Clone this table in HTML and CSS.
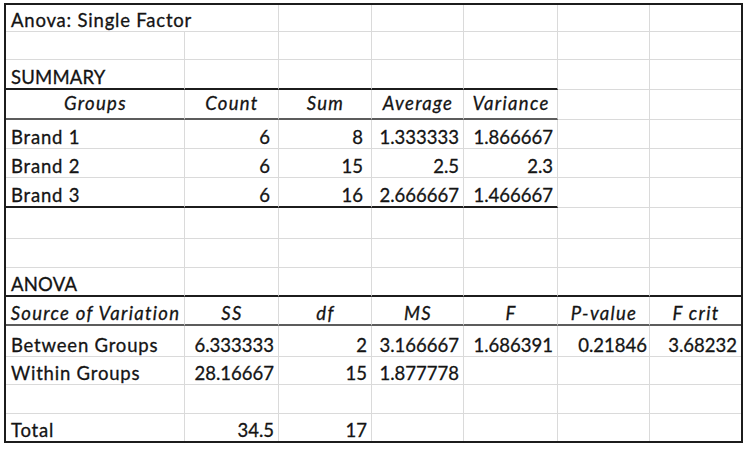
FILE: index.html
```html
<!DOCTYPE html>
<html lang="en">
<head>
<meta charset="utf-8">
<title>Anova: Single Factor</title>
<link rel="stylesheet" href="styles.css">
</head>
<body>
<div class="sheet">
  <!-- row 1 -->
  <div class="c span2">Anova: Single Factor</div>
  <div class="c"></div><div class="c"></div><div class="c"></div><div class="c"></div><div class="c lc"></div>
  <!-- row 2 -->
  <div class="c"></div><div class="c"></div><div class="c"></div><div class="c"></div><div class="c"></div><div class="c"></div><div class="c lc"></div>
  <!-- row 3 -->
  <div class="c caps thick">SUMMARY</div><div class="c thick"></div><div class="c thick"></div><div class="c thick"></div><div class="c thick"></div><div class="c"></div><div class="c lc"></div>
  <!-- row 4 -->
  <div class="c hd dark up">Groups</div><div class="c hd dark up">Count</div><div class="c hd dark up">Sum</div><div class="c hd dark up">Average</div><div class="c hd dark up">Variance</div><div class="c"></div><div class="c lc"></div>
  <!-- row 5 -->
  <div class="c">Brand 1</div><div class="c num wide">6</div><div class="c num wide">8</div><div class="c num">1.333333</div><div class="c num">1.866667</div><div class="c"></div><div class="c lc"></div>
  <!-- row 6 -->
  <div class="c">Brand 2</div><div class="c num wide">6</div><div class="c num wide">15</div><div class="c num">2.5</div><div class="c num">2.3</div><div class="c"></div><div class="c lc"></div>
  <!-- row 7 -->
  <div class="c thick">Brand 3</div><div class="c num wide thick">6</div><div class="c num wide thick">16</div><div class="c num thick">2.666667</div><div class="c num thick">1.466667</div><div class="c"></div><div class="c lc"></div>
  <!-- row 8 -->
  <div class="c"></div><div class="c"></div><div class="c"></div><div class="c"></div><div class="c"></div><div class="c"></div><div class="c lc"></div>
  <!-- row 9 -->
  <div class="c"></div><div class="c"></div><div class="c"></div><div class="c"></div><div class="c"></div><div class="c"></div><div class="c lc"></div>
  <!-- row 10 -->
  <div class="c caps thick">ANOVA</div><div class="c thick"></div><div class="c thick"></div><div class="c thick"></div><div class="c thick"></div><div class="c thick"></div><div class="c thick lc"></div>
  <!-- row 11 -->
  <div class="c hd dark">Source of Variation</div><div class="c hd dark">SS</div><div class="c hd dark">df</div><div class="c hd dark">MS</div><div class="c hd dark">F</div><div class="c hd dark">P-value</div><div class="c hd dark lc">F crit</div>
  <!-- row 12 -->
  <div class="c">Between Groups</div><div class="c num">6.333333</div><div class="c num">2</div><div class="c num">3.166667</div><div class="c num">1.686391</div><div class="c num tight">0.21846</div><div class="c num lc">3.68232</div>
  <!-- row 13 -->
  <div class="c">Within Groups</div><div class="c num">28.16667</div><div class="c num">15</div><div class="c num">1.877778</div><div class="c"></div><div class="c"></div><div class="c lc"></div>
  <!-- row 14 -->
  <div class="c"></div><div class="c"></div><div class="c"></div><div class="c"></div><div class="c"></div><div class="c"></div><div class="c lc"></div>
  <!-- row 15 -->
  <div class="c lr">Total</div><div class="c num lr">34.5</div><div class="c num lr">17</div><div class="c lr"></div><div class="c lr"></div><div class="c lr"></div><div class="c lr lc"></div>
</div>
</body>
</html>
```

FILE: styles.css
```css
html, body {
  margin: 0;
  padding: 0;
  background: #ffffff;
}

.sheet {
  margin: 3px 0 0 4px;
  width: 735px;
  border: 2px solid #1c1c1c;
  display: grid;
  grid-template-columns: 179px 94px 93px 92px 94px 92px 91px;
  grid-template-rows: 27px 28px 30px 30px 29px 29px 30px 31px 29px 29px 29px 31px 28px 29px 27px;
  font-family: Lato, "Open Sans", sans-serif;
  font-size: 18.5px;
  color: #141414;
  -webkit-text-stroke: 0.3px #141414;
}

.c {
  box-sizing: border-box;
  border-right: 1px solid #dadada;
  border-bottom: 1px solid #dadada;
  padding: 0 4px 1px 5px;
  line-height: 20px;
  letter-spacing: 0.8px;
  display: flex;
  align-items: flex-end;
  justify-content: flex-start;
  white-space: nowrap;
  overflow: visible;
}

.span2 {
  grid-column: span 2;
}

.lc {
  border-right: none;
}

.lr {
  border-bottom: none;
}

.caps {
  letter-spacing: 0.2px;
}

.num {
  justify-content: flex-end;
  letter-spacing: 0;
}

.wide {
  padding-right: 8px;
}

.tight {
  padding-right: 2px;
}

.hd {
  font-style: italic;
  letter-spacing: 1.3px;
  justify-content: center;
  padding-left: 2px;
  padding-right: 1px;
}

.up {
  padding-bottom: 5px;
}

.thick {
  border-bottom: 2px solid #1c1c1c;
}

.dark {
  border-bottom: 2px solid #5c5c5c;
}
```
